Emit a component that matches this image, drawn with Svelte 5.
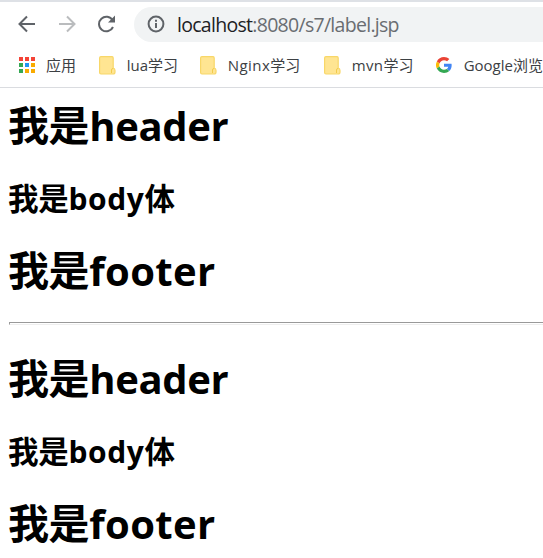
<script>
  const folders = [
    { latin: 'lua', width: 101 },
    { latin: 'Nginx', width: 124 },
    { latin: 'mvn', width: 112 }
  ];
  const colors = ['#f44336', '#f44336', '#f44336', '#34a853', '#2196f3', '#f9ab00', '#34a853', '#f9ab00', '#f9ab00'];
  const sections = [0, 1];
</script>

<div class="browser">
  <header>
    <nav class="toolbar">
      <svg class="back" width="18" height="18" viewBox="0 0 18 18"><path d="M17 9H2M9 1.5L1.5 9L9 16.5" /></svg>
      <svg class="forward" width="18" height="18" viewBox="0 0 18 18"><path d="M1 9H16M9 1.5L16.5 9L9 16.5" /></svg>
      <svg class="reload" width="20" height="18" viewBox="0 0 20 18"><path d="M15.6 5.3A7.3 7.3 0 1 0 16 12" /><path class="tip" d="M18 .5V7.5H11Z" /></svg>
      <div class="address">
        <svg width="18" height="18" viewBox="0 0 18 18"><circle cx="9" cy="9" r="7.4" /><path d="M9 8V13M9 4.8V6.7" /></svg>
        <span class="url"><b>localhost</b>:8080/s7/label.jsp</span>
      </div>
    </nav>
    <nav class="bookmarks">
      <div class="apps">
        <span class="grid">{#each colors as color}<i style:background={color}></i>{/each}</span>
        <span class="label">应用</span>
      </div>
      {#each folders as folder}
        <div class="bookmark" style:width="{folder.width}px">
          <svg width="17" height="19" viewBox="0 0 17 19"><path d="M2 .6H13Q14.2 .6 14.2 2V12.2Q16 12.5 16 14.5V16Q16 18 14 18H2Q.6 18 .6 16.5V2Q.6.6 2 .6Z" fill="#ffe592" stroke="#f8d768" stroke-width="1.2" /><path d="M12.5 17V14Q12.5 12.5 14 12.5" fill="none" stroke="#f2cb4c" /></svg>
          <span class="label"><span class="{folder.latin.toLowerCase()}">{folder.latin}</span>学习</span>
        </div>
      {/each}
      <div class="bookmark google">
        <svg width="16" height="16" viewBox="0 0 48 48"><path fill="#ea4335" d="M24 9.5c3.5 0 6.7 1.2 9.2 3.6l6.9-6.9C35.9 2.4 30.5 0 24 0 14.6 0 6.5 5.4 2.6 13.2l8 6.2C12.4 13.7 17.7 9.5 24 9.5z" /><path fill="#4285f4" d="M47 24.6c0-1.6-.2-3.1-.4-4.6H24v9h12.9c-.6 3-2.3 5.5-4.8 7.2l7.7 6C44.4 38 47 32 47 24.6z" /><path fill="#fbbc05" d="M10.5 28.6A14.5 14.5 0 0 1 10.6 19.4l-8-6.2a24 24 0 0 0 0 21.6l7.9-6.2z" /><path fill="#34a853" d="M24 48c6.5 0 11.9-2.1 15.8-5.8l-7.7-6c-2.1 1.4-4.9 2.3-8.1 2.3-6.3 0-11.6-4.2-13.5-9.9l-8 6.2C6.5 42.6 14.6 48 24 48z" /></svg>
        <span class="label"><span class="goog">Google</span>浏览</span>
      </div>
    </nav>
  </header>
  <main>
    {#each sections as section}
      {#if section > 0}<hr />{/if}
      <section>
        <h1>我是<span class="head">header</span></h1>
        <h2>我是<span class="body">body</span>体</h2>
        <h1>我是<span class="foot">footer</span></h1>
      </section>
    {/each}
  </main>
</div>

<style>
  .browser { width: 543px; height: 558px; overflow: hidden; background: #fff; font-family: "Noto Sans CJK SC", sans-serif; }
  header { box-sizing: border-box; height: 88px; border-top: 2px solid #dee1e6; border-bottom: 1px solid #dadce0; }
  svg { display: block; flex: none; }
  .toolbar { display: flex; align-items: center; height: 44px; padding-left: 18px; }
  .toolbar path, .toolbar circle { fill: none; stroke: #5f6368; stroke-width: 2; }
  .forward { margin-left: 22px; }
  .toolbar .forward path { stroke: #babcbe; }
  .reload { margin-left: 21px; }
  .toolbar .tip { fill: #5f6368; stroke: none; }
  .address { display: flex; align-items: center; flex: 1; height: 35px; margin-left: 17px; padding-left: 13px; border-radius: 18px 0 0 18px; background: #f1f3f4; }
  .url { margin-left: 12px; font: 19.5px/35px "Open Sans", sans-serif; letter-spacing: -.71px; color: #696d71; white-space: nowrap; }
  .url b { font-weight: 400; color: #202124; }
  .bookmarks { display: flex; align-items: center; height: 38px; padding: 0 0 2px 19px; font-size: 15px; line-height: 20px; color: #3c4043; white-space: nowrap; }
  .label span { font-family: "Open Sans", sans-serif; }
  .apps { display: flex; align-items: center; width: 80px; gap: 10px; }
  .grid { display: grid; grid-template-columns: repeat(3, 4px); gap: 2px; width: 17px; }
  .grid i { height: 4px; }
  .bookmark { display: flex; align-items: center; flex: none; gap: 11px; }
  .bookmark .nginx { letter-spacing: .45px; }
  .bookmark .mvn { letter-spacing: .4px; }
  .google { gap: 12px; }
  main { padding: 6px 0 0 9px; }
  h1, h2 { margin: 0; font-weight: 700; color: #000; white-space: nowrap; }
  h1 { height: 60px; font-size: 41px; line-height: 58px; letter-spacing: -.4px; text-indent: -1px; }
  h2 { height: 40px; margin: 23px 0 22px; font-size: 30.5px; line-height: 40px; letter-spacing: -.3px; text-indent: -1px; }
  h1 span, h2 span { font-family: "Open Sans", sans-serif; }
  h1 span { font-size: 40px; }
  h2 span { font-size: 30px; }
  .head { letter-spacing: -.35px; }
  .body { letter-spacing: .6px; }
  .foot { letter-spacing: .35px; }
  hr { height: 1px; margin: 23px 0 22px; border: 1px solid #999; border-right: 0; border-bottom-color: #eee; }
</style>
